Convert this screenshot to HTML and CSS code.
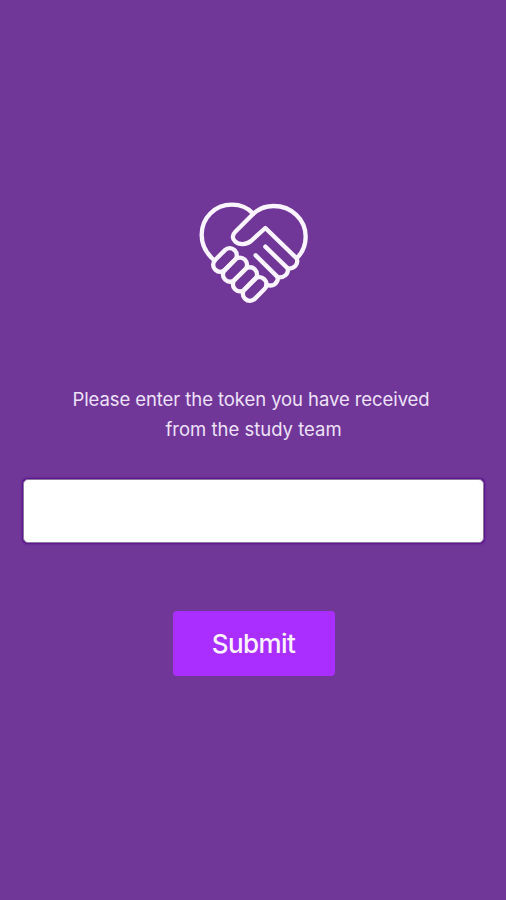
FILE: index.html
```html
<!DOCTYPE html>
<html lang="en">
<head>
<meta charset="UTF-8">
<meta name="viewport" content="width=device-width, initial-scale=1">
<title>Study token</title>

<link rel="stylesheet" href="styles.css">
</head>

<body>

<form class="token-form">
  <!-- ===== LOGO ===== -->
  <svg class="logo" viewBox="0 0 390 375" aria-hidden="true">
    <path d="M190 71C174 54 151 44 126 44C74 44 35 84 35 134C35 164 48 190 74 212"/>
    <path d="M320 205L226 114L183 153C169 165 147 165 136 155C125 145 127 134 136 125L187 74C205 56 225 48 251 48C304 48 347 88 347 140C347 165 338 187 320 205C326 221 315 236 294 236C295 252 283 264 264 262C264 280 249 292 230 284"/>
    <path d="M226 170L294 236M197 196L264 262"/>
    <!-- fingers -->
    <rect x="-41" y="-21" width="82" height="42" rx="20" transform="translate(105 210) rotate(-45)"/>
    <rect x="-42" y="-21" width="84" height="42" rx="20" transform="translate(135 239) rotate(-45)"/>
    <rect x="-42" y="-21" width="84" height="42" rx="20" transform="translate(165 268) rotate(-45)"/>
    <rect x="-41" y="-21" width="82" height="42" rx="20" transform="translate(194 297) rotate(-45)"/>
  </svg>

  <label class="message" for="token">
    <span class="message-line">Please enter the token you have received</span>
    <span class="message-line">from the study team</span>
  </label>
  <input class="token-input" id="token" type="text">
  <button class="submit-btn" type="button">Submit</button>
</form>

</body>
</html>
```
FILE: styles.css
```css
body {
  margin: 0;
  font-family: Inter, "Liberation Sans", sans-serif;
  background: #703799;
  min-height: 100vh;
}

.token-form {
  display: flex;
  flex-direction: column;
  align-items: center;
  padding: 190px 22px 0 23px;
}

/* ===== LOGO ===== */
.logo {
  width: 130px;
  height: 125px;
  margin-left: 3px;
  fill: none;
  stroke: #faf4ff;
  stroke-width: 13;
  stroke-linecap: round;
  stroke-linejoin: round;
}

/* ===== TEXT ===== */
.message {
  margin-top: 69px;
  color: #eee2f7;
  font-size: 18.5px;
  line-height: 30px;
  text-align: center;
  white-space: nowrap;
}

.message-line {
  display: block;
}

.message-line:first-child {
  padding-right: 5px;
  letter-spacing: -0.08px;
}

/* ===== CONTROLS ===== */
.token-input {
  box-sizing: border-box;
  width: 100%;
  height: 64px;
  margin: 35px 0 68px;
  padding: 0 16px;
  border: 1px solid #8c7c9f;
  border-radius: 5px;
  background: white;
  font: inherit;
  font-size: 20px;
  box-shadow: 0 0 2px 0.5px #590d8b;
}

.submit-btn {
  width: 162px;
  height: 65px;
  padding: 0;
  border: none;
  border-radius: 4px;
  background: #aa2eff;
  color: #fbf2ff;
  font: inherit;
  font-size: 26px;
  font-weight: 500;
  letter-spacing: -0.6px;
  cursor: pointer;
}
```
